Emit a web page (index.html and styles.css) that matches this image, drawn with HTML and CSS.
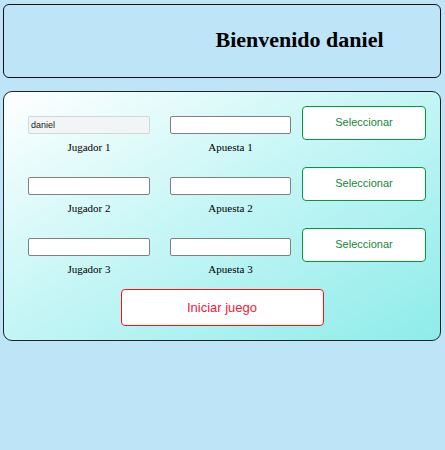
FILE: index.html
```html
<!DOCTYPE html>
<html lang="es">
<head>
<meta charset="utf-8">
<title>Juego</title>
<link rel="stylesheet" href="styles.css">
</head>
<body>
  <header class="header">
    <h2 class="title">Bienvenido daniel</h2>
  </header>
  <main class="panel">
    <div class="row">
      <div class="field field-player">
        <input class="input input-locked" type="text" value="daniel" readonly>
        <span class="label">Jugador 1</span>
      </div>
      <div class="field field-bet">
        <input class="input" type="text">
        <span class="label">Apuesta 1</span>
      </div>
      <button class="btn-select">Seleccionar</button>
    </div>
    <div class="row">
      <div class="field field-player">
        <input class="input" type="text">
        <span class="label">Jugador 2</span>
      </div>
      <div class="field field-bet">
        <input class="input" type="text">
        <span class="label">Apuesta 2</span>
      </div>
      <button class="btn-select">Seleccionar</button>
    </div>
    <div class="row">
      <div class="field field-player">
        <input class="input" type="text">
        <span class="label">Jugador 3</span>
      </div>
      <div class="field field-bet">
        <input class="input" type="text">
        <span class="label">Apuesta 3</span>
      </div>
      <button class="btn-select">Seleccionar</button>
    </div>
    <div class="start-wrap">
      <button class="btn-start">Iniciar juego</button>
    </div>
  </main>
</body>
</html>
```
FILE: styles.css
```css
html, body {
  margin: 0;
  padding: 0;
}
body {
  background: #bee4f8;
  padding: 4px 4px 0 3px;
  font-family: "Liberation Serif", "Times New Roman", serif;
  height: 450px;
  box-sizing: border-box;
}
.header {
  height: 74px;
  box-sizing: border-box;
  border: 1px solid #111;
  border-radius: 6px;
  display: flex;
  align-items: center;
  justify-content: center;
  padding-left: 155px;
}
.title {
  margin: 0;
  font-size: 22px;
  font-weight: bold;
  color: #000;
  line-height: 26px;
  position: relative;
  top: -1px;
}
.panel {
  display: block;
  margin-top: 13px;
  border: 1px solid #222;
  border-radius: 9px;
  padding: 14px 14px 14px 24px;
  background: linear-gradient(to bottom right, #ffffff 0%, #c8f6f6 45%, #8eecea 100%);
}
.row {
  display: flex;
  align-items: flex-start;
  height: 48px;
  margin-bottom: 13px;
}
.field {
  display: flex;
  flex-direction: column;
  align-items: center;
  margin-top: 10px;
}
.field-player {
  width: 122px;
  margin-right: 20px;
}
.field-bet {
  width: 121px;
  margin-right: 11px;
}
.input {
  width: 100%;
  height: 18px;
  box-sizing: border-box;
  margin: 0;
  padding: 0 2px;
  border: 1px solid #808080;
  border-radius: 2px;
  background: #fff;
  font-family: "Liberation Sans", Arial, sans-serif;
  font-size: 9px;
  color: #222;
  outline: none;
}
.input-locked {
  background: #f2f5f5;
  border-color: #cfd9dc;
}
.label {
  margin-top: 7px;
  font-size: 11px;
  line-height: 13px;
  color: #000;
}
.btn-select {
  width: 124px;
  height: 34px;
  box-sizing: border-box;
  margin: 0;
  border: 1px solid #009a3e;
  border-radius: 4px;
  background: #fff;
  color: #11883a;
  font-family: "Liberation Sans", Arial, sans-serif;
  font-size: 11px;
  padding: 0;
  padding-bottom: 2px;
}
.start-wrap {
  display: flex;
  justify-content: center;
  padding-right: 10px;
}
.btn-start {
  width: 203px;
  height: 37px;
  box-sizing: border-box;
  margin: 0;
  border: 1px solid #ff1010;
  border-radius: 4px;
  background: #fff;
  color: #f0203c;
  font-family: "Liberation Sans", Arial, sans-serif;
  font-size: 13px;
  padding: 0;
}
```
